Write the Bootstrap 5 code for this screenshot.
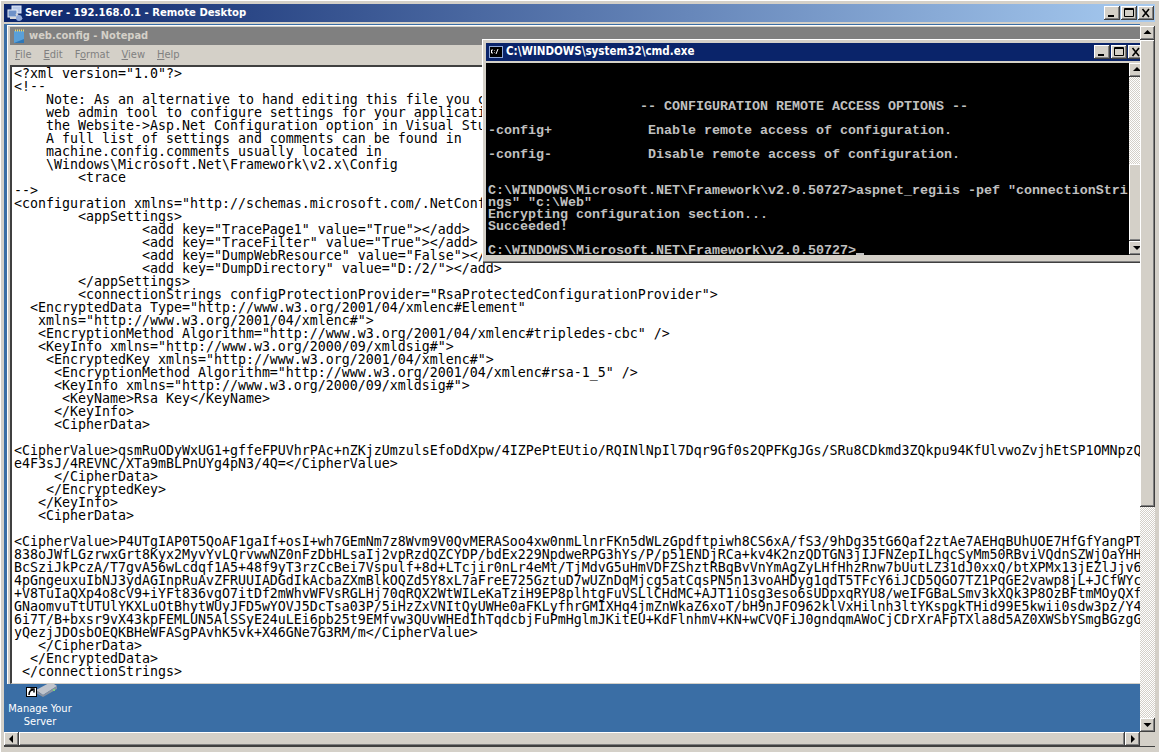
<!DOCTYPE html>
<html lang="en">
<head>
<meta charset="utf-8">
<title>Server - 192.168.0.1 - Remote Desktop</title>
<link href="https://cdn.jsdelivr.net/npm/bootstrap@5.3.0/dist/css/bootstrap.min.css" rel="stylesheet">
<style>
html,body{height:752px;overflow:hidden;background:#d4d0c8;}
.rd-frame{width:1159px;height:752px;padding:4px 4px 3px 4px;background:#d4d0c8;box-shadow:inset 1px 1px 0 #fff;font-family:"DejaVu Sans Condensed","DejaVu Sans","Liberation Sans",sans-serif;font-stretch:condensed;}
.rd-title{height:18px;flex:none;padding:0 1px 0 3px;background:linear-gradient(90deg,#0a246a,#a6caf0);color:#fff;font-size:11.2px;font-weight:700;gap:1px;}
.rd-title svg,.np-title svg{flex:none;}
.wbtn{width:16px;height:14px;background:#d4d0c8;box-shadow:inset -1px -1px 0 #404040,inset 1px 1px 0 #fff,inset -2px -2px 0 #808080;flex:none;}
.wbtn svg{display:block;}
.rd-view{height:708px;margin-top:2px;flex:none;}
.rd-desktop{width:1136px;background:#3a6ea5;}
.vbar{width:15px;flex:none;padding-top:2px;}
.sbtn{height:14px;width:100%;background:#d4d0c8;box-shadow:inset -1px -1px 0 #404040,inset 1px 1px 0 #fff,inset -2px -2px 0 #808080;flex:none;}
.sbtn svg{display:block;}
.sthumb{background:#d4d0c8;box-shadow:inset -1px -1px 0 #404040,inset 1px 1px 0 #fff,inset -2px -2px 0 #808080;}
.vthumb{height:467px;flex:none;}
.strack{background:repeating-conic-gradient(#fff 0 25%,#d4d0c8 0 50%) 0 0/2px 2px;}
.hbar{height:15px;margin-top:0;flex:none;border-bottom:1px solid #404040;}
.hbtn{width:15px;height:14px;flex:none;}
.desk-icon{left:0;top:636px;width:72px;color:#fff;font-size:11px;line-height:13px;text-align:center;}
.desk-art{height:37px;margin-bottom:5px;}
.np-win{left:3px;top:1px;width:1140px;height:659px;background:#d4d0c8;box-shadow:inset 1px 1px 0 #fff;padding:2px 0 0 3px;}
.np-title{height:18px;background:#808080;color:#d4d0c8;font-size:11px;font-weight:700;padding-left:2px;gap:2px;flex:none;}
.np-menu{height:20px;gap:12px;padding-left:5px;color:#808080;font-size:11px;flex:none;}
.np-edit{flex:1 1 auto;background:#fff;border-left:2px solid #404040;border-top:2px solid #404040;border-bottom:1px solid #d4d0c8;padding:0 0 0 2px;min-height:0;}
.np-text{margin:0;font:13.29px/13px "DejaVu Sans Mono","Liberation Mono",monospace;color:#000;white-space:pre;overflow:hidden;height:100%;}
.cmd-win{left:478px;top:15px;width:667px;height:224px;background:#d4d0c8;box-shadow:inset 1px 1px 0 #fff,inset 0 -1px 0 #404040,inset 0 -2px 0 #808080;padding:4px 0 0 4px;z-index:5;}
.cmd-title{height:18px;background:#0a246a;color:#fff;font-size:11.5px;font-weight:700;padding-left:2px;gap:2px;flex:none;margin-right:4px;}
.cmd-body{margin-top:2px;height:192px;flex:none;margin-right:4px;}
.cmd-screen{flex:1 1 auto;background:#000;padding:2px 0 0 2px;overflow:hidden;}
.cmd-text{margin:0;font:700 13.33px/12px "Liberation Mono",monospace;color:#c0c0c0;white-space:pre;overflow:hidden;}
.cmd-cur{display:inline-block;width:8px;height:3px;background:#c0c0c0;vertical-align:-2px;}
.cmd-bar{width:16px;flex:none;}
.cmd-thumb{height:77px;flex:none;}
.bg-beige{background:#d4d0c8;}
.cmd-btnwrap{left:1090px;top:21px;gap:1px;z-index:6;}
.rd-btns{gap:1px;}
</style>
</head>
<body>
<div class="rd-frame d-flex flex-column overflow-hidden">
  <div class="rd-title d-flex align-items-center">
    <svg width="17" height="17" viewBox="0 0 17 17"><rect x="5" y="1" width="9" height="7" fill="#b8c8e8" stroke="#dfe8f8"/><rect x="1" y="5" width="9" height="7" fill="#6f92c8" stroke="#e8eef8"/><path d="M3 13h7M9 9l6 5" stroke="#d8d8d8" stroke-width="2"/><circle cx="12" cy="13" r="3" fill="#8fa8d8"/></svg>
    <span class="flex-grow-1">Server - 192.168.0.1 - Remote Desktop</span>
    <span class="d-flex rd-btns">
      <span class="wbtn"><svg width="16" height="14"><rect x="4" y="9" width="6" height="2" fill="#000"/></svg></span>
      <span class="wbtn"><svg width="16" height="14"><path d="M3.500 2.500h9v8h-9z M3 3.500h10" fill="none" stroke="#000"/></svg></span>
      <span class="wbtn"><svg width="16" height="14"><path d="M4.500 3l6.500 8M11 3l-6.500 8" stroke="#000" stroke-width="1.600"/></svg></span>
    </span>
  </div>
  <div class="rd-view d-flex">
    <div class="rd-desktop position-relative overflow-hidden">
      <div class="desk-icon position-absolute">
        <div class="desk-art d-flex justify-content-center">
          <svg width="40" height="37" viewBox="0 0 40 37"><path d="M16 30l15-8 6 4-14 9z" fill="#c0c4cc"/><path d="M16 30l7 5v2l-7-4zM23 35l14-9v3l-14 8z" fill="#8a92a0"/><rect x="33" y="29" width="2" height="2" fill="#7fd07f"/><rect x="6.500" y="27.500" width="10" height="9" fill="#fff" stroke="#000"/><path d="M9 35c0-3 1-5 4-5M10.500 29h3.500v3.500" fill="none" stroke="#000" stroke-width="1.500"/></svg>
        </div>
        Manage Your<br>Server
      </div>
      <div class="np-win position-absolute d-flex flex-column">
        <div class="np-title d-flex align-items-center">
          <svg width="15" height="16" viewBox="0 0 15 16"><rect x="2" y="3" width="10" height="12" fill="#5aa0d8"/><path d="M2 15l10 0 0-4z" fill="#2f78b8"/><path d="M3 2.500h9" stroke="#e8d870" stroke-width="2" stroke-dasharray="1 1"/></svg>
          <span>web.config - Notepad</span>
        </div>
        <div class="np-menu d-flex align-items-center">
          <span><u>F</u>ile</span><span><u>E</u>dit</span><span>F<u>o</u>rmat</span><span><u>V</u>iew</span><span><u>H</u>elp</span>
        </div>
        <div class="np-edit overflow-hidden">
<pre class="np-text">&lt;?xml version="1.0"?&gt;
&lt;!--
    Note: As an alternative to hand editing this file you can use the
    web admin tool to configure settings for your application. Use
    the Website-&gt;Asp.Net Configuration option in Visual Studio.
    A full list of settings and comments can be found in
    machine.config.comments usually located in
    \Windows\Microsoft.Net\Framework\v2.x\Config
        &lt;trace
--&gt;
&lt;configuration xmlns="http://schemas.microsoft.com/.NetConfiguration/v2.0"&gt;
        &lt;appSettings&gt;
                &lt;add key="TracePage1" value="True"&gt;&lt;/add&gt;
                &lt;add key="TraceFilter" value="True"&gt;&lt;/add&gt;
                &lt;add key="DumpWebResource" value="False"&gt;&lt;/add&gt;
                &lt;add key="DumpDirectory" value="D:/2/"&gt;&lt;/add&gt;
        &lt;/appSettings&gt;
        &lt;connectionStrings configProtectionProvider="RsaProtectedConfigurationProvider"&gt;
  &lt;EncryptedData Type="http://www.w3.org/2001/04/xmlenc#Element"
   xmlns="http://www.w3.org/2001/04/xmlenc#"&gt;
   &lt;EncryptionMethod Algorithm="http://www.w3.org/2001/04/xmlenc#tripledes-cbc" /&gt;
   &lt;KeyInfo xmlns="http://www.w3.org/2000/09/xmldsig#"&gt;
    &lt;EncryptedKey xmlns="http://www.w3.org/2001/04/xmlenc#"&gt;
     &lt;EncryptionMethod Algorithm="http://www.w3.org/2001/04/xmlenc#rsa-1_5" /&gt;
     &lt;KeyInfo xmlns="http://www.w3.org/2000/09/xmldsig#"&gt;
      &lt;KeyName&gt;Rsa Key&lt;/KeyName&gt;
     &lt;/KeyInfo&gt;
     &lt;CipherData&gt;

&lt;CipherValue&gt;qsmRuODyWxUG1+gffeFPUVhrPAc+nZKjzUmzulsEfoDdXpw/4IZPePtEUtio/RQINlNpIl7Dqr9Gf0s2QPFKgJGs/SRu8CDkmd3ZQkpu94KfUlvwoZvjhEtSP1OMNpzQ
e4F3sJ/4REVNC/XTa9mBLPnUYg4pN3/4Q=&lt;/CipherValue&gt;
     &lt;/CipherData&gt;
    &lt;/EncryptedKey&gt;
   &lt;/KeyInfo&gt;
   &lt;CipherData&gt;

&lt;CipherValue&gt;P4UTgIAP0T5QoAF1gaIf+osI+wh7GEmNm7z8Wvm9V0QvMERASoo4xw0nmLlnrFKn5dWLzGpdftpiwh8CS6xA/fS3/9hDg35tG6Qaf2ztAe7AEHqBUhUOE7HfGfYangPT
838oJWfLGzrwxGrt8Kyx2MyvYvLQrvwwNZ0nFzDbHLsaIj2vpRzdQZCYDP/bdEx229NpdweRPG3hYs/P/p51ENDjRCa+kv4K2nzQDTGN3jIJFNZepILhqcSyMm50RBviVQdnSZWjOaYHH
BcSziJkPczA/T7gvA56wLcdqf1A5+48f9yT3rzCcBei7Vspulf+8d+LTcjir0nLr4eMt/TjMdvG5uHmVDFZShztRBqBvVnYmAgZyLHfHhzRnw7bUutLZ31dJ0xxQ/btXPMx13jEZlJjv6
4pGngeuxuIbNJ3ydAGInpRuAvZFRUUIADGdIkAcbaZXmBlkOQZd5Y8xL7aFreE725GztuD7wUZnDqMjcg5atCqsPN5n13voAHDyg1qdT5TFcY6iJCD5QGO7TZ1PqGE2vawp8jL+JCfWYc
+V8TuIaQXp4o8cV9+iYFt836vgO7itDf2mWhvWFVsRGLHj70qRQX2WtWILeKaTziH9EP8plhtgFuVSLlCHdMC+AJT1iOsg3eso6sUDpxqRYU8/weIFGBaLSmv3kXQk3P8OzBFtmMOyQXf
GNaomvuTtUTUlYKXLuOtBhytWUyJFD5wYOVJ5DcTsa03P/5iHzZxVNItQyUWHe0aFKLyfhrGMIXHq4jmZnWkaZ6xoT/bH9nJFO962klVxHilnh3ltYKspgkTHid99E5kwii0sdw3pz/Y4
6i7T/B+bxsr9vX43kpFEMLUN5AlSSyE24uLEi6pb25t9EMfvw3QUvWHEdIhTqdcbjFuPmHglmJKitEU+KdFlnhmV+KN+wCVQFiJ0gndqmAWoCjCDrXrAFpTXla8d5AZ0XWSbYSmgBGzgG
yQezjJDOsbOEQKBHeWFASgPAvhK5vk+X46GNe7G3RM/m&lt;/CipherValue&gt;
   &lt;/CipherData&gt;
  &lt;/EncryptedData&gt;
 &lt;/connectionStrings&gt;</pre>
        </div>
      </div>
      <div class="cmd-win position-absolute d-flex flex-column">
        <div class="cmd-title d-flex align-items-center">
          <svg width="16" height="14" viewBox="0 0 16 14"><rect x="1.500" y="1.500" width="13" height="11" fill="#000" stroke="#8fa8d8"/><path d="M5 5H3.500v3H5M6.500 5v.5M6.500 7.500V8M10 4L8 9" fill="none" stroke="#fff"/></svg>
          <span class="flex-grow-1">C:\WINDOWS\system32\cmd.exe</span>
        </div>
        <div class="cmd-body d-flex">
          <div class="cmd-screen">
<pre class="cmd-text">



                   -- CONFIGURATION REMOTE ACCESS OPTIONS --

-config+            Enable remote access of configuration.

-config-            Disable remote access of configuration.


C:\WINDOWS\Microsoft.NET\Framework\v2.0.50727&gt;aspnet_regiis -pef "connectionStri
ngs" "c:\Web"
Encrypting configuration section...
Succeeded!

C:\WINDOWS\Microsoft.NET\Framework\v2.0.50727&gt;<span class="cmd-cur"></span></pre>
          </div>
          <div class="cmd-bar d-flex flex-column">
            <div class="sbtn"><svg width="16" height="14"><polygon points="8,4 4,8 12,8" fill="#000"/></svg></div>
            <div class="strack flex-grow-1"></div>
            <div class="sthumb cmd-thumb"></div>
            <div class="sbtn"><svg width="16" height="14"><polygon points="4,5 12,5 8,9" fill="#000"/></svg></div>
          </div>
        </div>
      </div>
      <div class="cmd-btnwrap position-absolute d-flex">
        <span class="wbtn"><svg width="16" height="14"><rect x="4" y="9" width="6" height="2" fill="#000"/></svg></span>
        <span class="wbtn"><svg width="16" height="14"><path d="M3.500 2.500h9v8h-9z M3 3.500h10" fill="none" stroke="#000"/></svg></span>
        <span class="wbtn"><svg width="16" height="14"><path d="M4.500 3l6.500 8M11 3l-6.500 8" stroke="#000" stroke-width="1.600"/></svg></span>
      </div>
    </div>
    <div class="vbar d-flex flex-column bg-beige">
      <div class="sbtn"><svg width="15" height="14"><polygon points="7.500,4 3.500,8 11.500,8" fill="#000"/></svg></div>
      <div class="sthumb vthumb"></div>
      <div class="strack flex-grow-1"></div>
      <div class="sbtn"><svg width="15" height="14"><polygon points="3.500,5 11.500,5 7.500,9" fill="#000"/></svg></div>
    </div>
  </div>
  <div class="hbar d-flex">
    <div class="sbtn hbtn"><svg width="15" height="14"><polygon points="5,7 9,3 9,11" fill="#000"/></svg></div>
    <div class="sthumb flex-grow-1"></div>
    <div class="sbtn hbtn"><svg width="15" height="14"><polygon points="10,7 6,3 6,11" fill="#000"/></svg></div>
    <div class="hbtn bg-beige"></div>
  </div>
</div>
<script src="https://cdn.jsdelivr.net/npm/bootstrap@5.3.0/dist/js/bootstrap.bundle.min.js"></script>
</body>
</html>
